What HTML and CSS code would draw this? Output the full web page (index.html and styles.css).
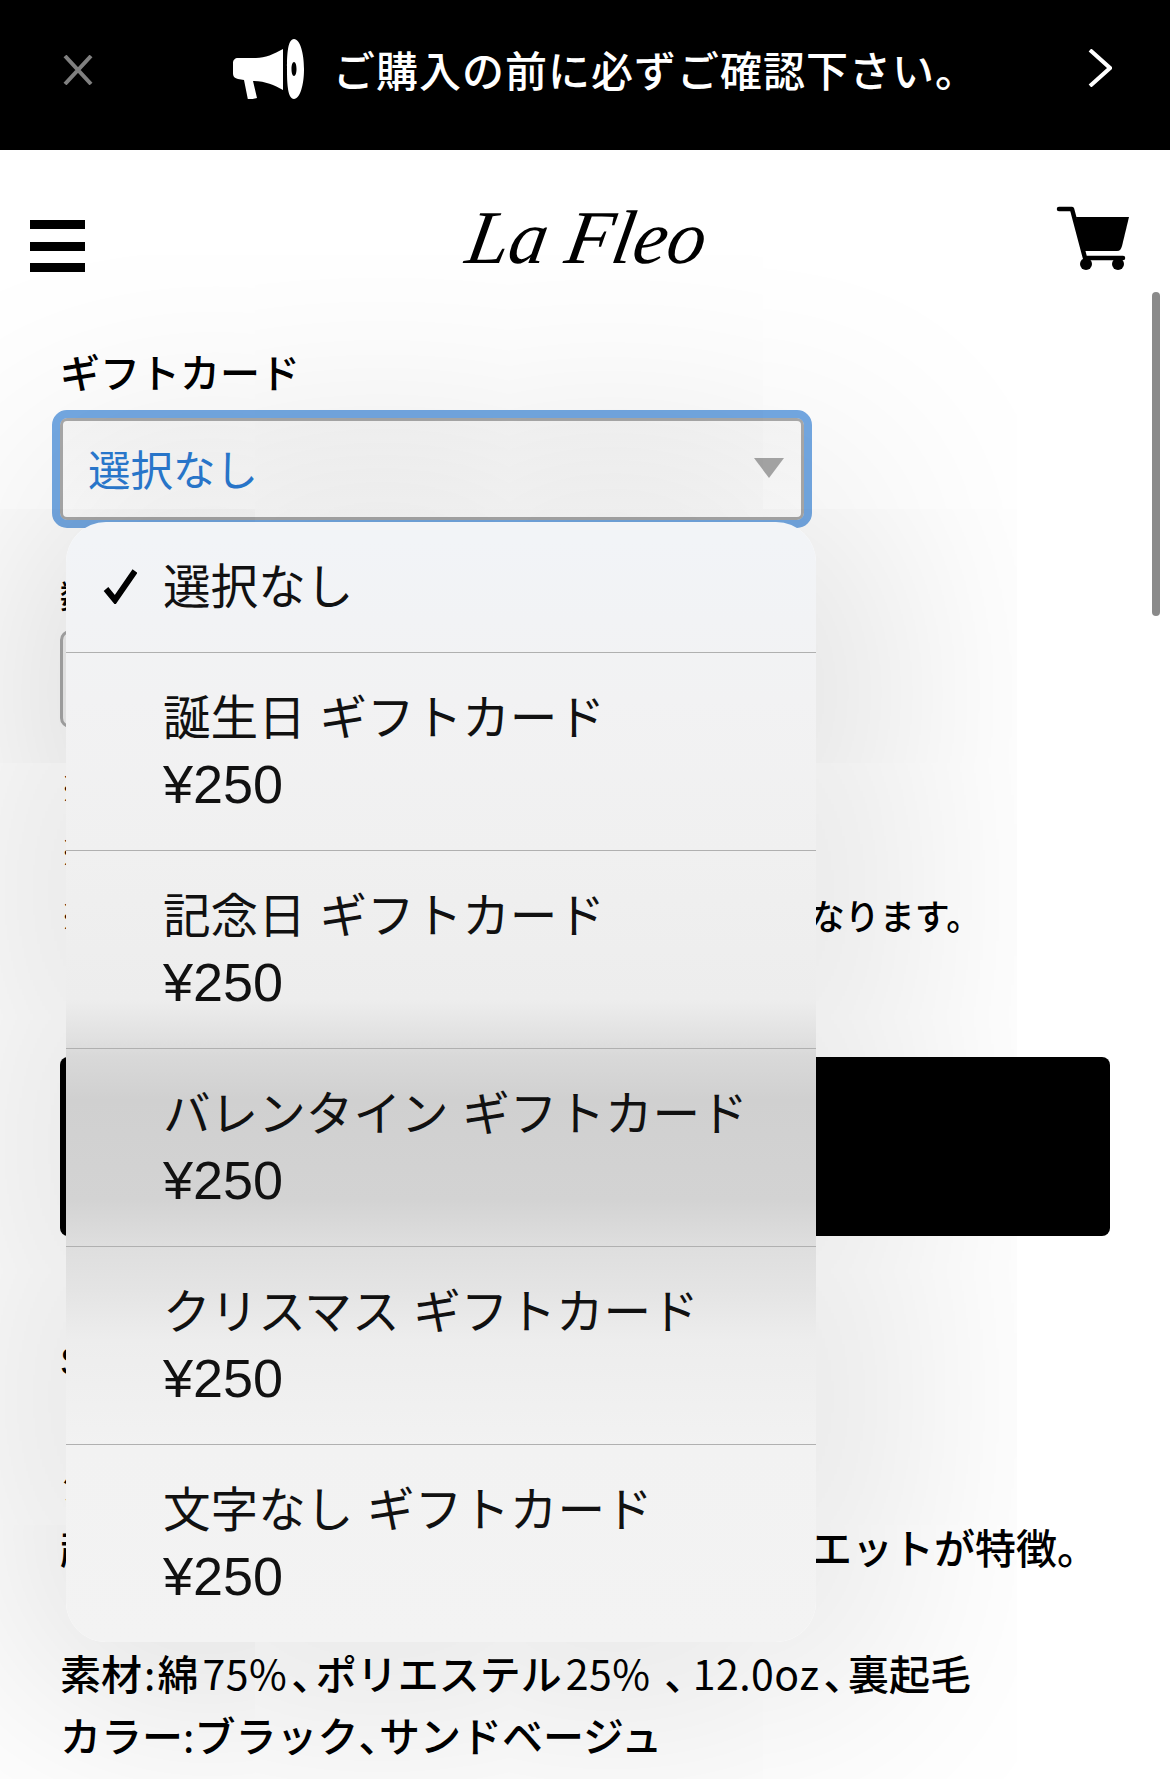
FILE: index.html
```html
<!DOCTYPE html>
<html lang="ja">
<head>
<meta charset="utf-8">
<title>La Fleo</title>
<link rel="stylesheet" href="styles.css">
</head>
<body>
<div class="page">
  <div class="topbar">
    <svg class="close" viewBox="0 0 30 30"><path d="M2 1 28 29M28 1 2 29"/></svg>
    <svg class="horn" viewBox="13 9 72 60"><path d="M63 19 63 60C54 55 45 51 33 51L37 68 28 70 24 50 18 49C14 48 13 46 13 43L13 33C13 30 15 28 18 28L36 28C45 28 54 24 63 19Z"/><path fill-rule="evenodd" d="M74 9C80 9 84 23 84 39S80 69 74 69 67 55 67 39 68 9 74 9ZM74 32C72.500 32 71.500 35 71.500 39S72.500 46 74 46 76.500 43 76.500 39 75.500 32 74 32Z"/></svg>
    <span class="notice">ご購入の前に必ずご確認下さい。</span>
    <svg class="next" viewBox="0 0 24 38"><path d="M2 1 22 19 2 37"/></svg>
  </div>
  <header class="header">
    <div class="burger"><i></i><i></i><i></i></div>
    <div class="logo">La Fleo</div>
    <svg class="cart" viewBox="0 0 100 85"><path class="cart-line" d="M19 14H32L45 63H83"/><path d="M36 22H89L82 51C81 54 80 56 77 56H42Z"/><circle cx="46" cy="69" r="6"/><circle cx="78" cy="69" r="6"/></svg>
  </header>
  <main class="main">
    <div class="label">ギフトカード</div>
    <div class="select focused">
      <span>選択なし</span>
      <svg class="arrow" viewBox="0 0 30 20"><path d="M0 0H30L15 20Z"/></svg>
    </div>
    <div class="label small">数量</div>
    <div class="select plain"></div>
    <ul class="notes">
      <li>※ギフトカードは無料でお付けいたします。</li>
      <li>※メッセージの内容はお選びいただけます。</li>
      <li>※ ギフトカードは お品物とは別に同梱し発送となります。</li>
    </ul>
    <div class="buy"></div>
    <p class="title">Sweat Hoodie</p>
    <p class="copy gap-a">シンプルなデザインの定番パーカー。</p>
    <p class="copy">超ゆったりとした<span class="half tight">、</span>オーバーサイズのシルエットが特徴。</p>
    <p class="copy gap-b">素材<span class="en colon">:</span>綿<span class="en pad">75%</span><span class="half wide">、</span>ポリエステル<span class="en pad">25% </span><span class="half wide">、</span><span class="en pad">12.0oz</span><span class="half wide">、</span>裏起毛</p>
    <p class="copy">カラー<span class="en">:</span>ブラック<span class="half">、</span>サンドベージュ</p>
  </main>
  <div class="menu">
    <div class="option first"><span class="tick"><svg viewBox="0 0 34 36"><path d="M3 21 12 32 32 3"/></svg></span><div>選択なし</div></div>
    <div class="option"><span class="tick"></span><div>誕生日 ギフトカード<br><span class="price">¥250</span></div></div>
    <div class="option"><span class="tick"></span><div>記念日 ギフトカード<br><span class="price">¥250</span></div></div>
    <div class="option"><span class="tick"></span><div>バレンタイン ギフトカード<br><span class="price">¥250</span></div></div>
    <div class="option"><span class="tick"></span><div>クリスマス ギフトカード<br><span class="price">¥250</span></div></div>
    <div class="option last"><span class="tick"></span><div>文字なし ギフトカード<br><span class="price">¥250</span></div></div>
  </div>
  <div class="scrollbar"></div>
</div>
</body>
</html>
```
FILE: styles.css
```css
* { box-sizing: border-box; }
html, body { margin: 0; padding: 0; background: #fff; }
body { font-family: "Noto Sans CJK JP", "Liberation Sans", sans-serif; color: #000; }
.page { position: relative; width: 1170px; height: 1779px; overflow: hidden; background: #fff; }

.topbar { position: relative; z-index: 3; display: flex; align-items: center; height: 150px; padding: 0 58px 12px 63px; background: #000; color: #fff; }
.close { width: 30px; height: 30px; margin-top: 2px; fill: none; stroke: #808080; stroke-width: 4; }
.horn { width: 72px; height: 60px; margin-left: 140px; fill: #fff; }
.notice { margin-left: 28px; font-size: 42px; font-weight: 500; letter-spacing: 1px; line-height: 60px; white-space: nowrap; }
.next { width: 24px; height: 38px; margin-top: -2px; margin-left: auto; fill: none; stroke: #fff; stroke-width: 4; }

.header { position: relative; z-index: 2; display: flex; align-items: flex-start; justify-content: space-between; height: 198px; padding: 57px 30px 0 30px; }
.burger { display: flex; flex-direction: column; gap: 12.500px; width: 55px; margin-top: 13px; }
.burger i { display: block; height: 9px; background: #000; }
.logo { margin-top: -20px; margin-left: 50px; font-family: "Liberation Serif", serif; font-style: italic; font-size: 76px; line-height: 100px; white-space: nowrap; transform: skewX(-10deg); }
.cart { width: 100px; height: 85px; margin-top: -12px; }
.cart-line { fill: none; stroke: #000; stroke-width: 4.500; stroke-linecap: round; stroke-linejoin: round; }

.main { padding: 0 60px; }
.label { font-size: 40px; font-weight: 500; line-height: 46px; }
.label.small { margin-top: 53px; font-size: 32px; line-height: 42px; }
.select { display: flex; align-items: center; justify-content: space-between; width: 744px; height: 98px; padding: 0 17px 0 25px; border: 3px solid #aaa; border-radius: 7px; background: linear-gradient(#f9f9f9, #ffffff); font-size: 42.500px; color: #2a7bd3; }
.select.focused { height: 102px; margin-top: 24px; padding-bottom: 3px; outline: 8px solid #74a9e4; outline-offset: 0; box-shadow: 0 0 0 1px #74a9e4; }
.select.plain { margin-top: 15px; border-radius: 10px; background: #f4f4f4; }
.arrow { width: 30px; height: 20px; fill: #a8a8a8; }

.notes { margin: 27px 0 0; padding: 0; list-style: none; font-size: 35px; font-weight: 500; line-height: 64px; white-space: nowrap; }
.buy { height: 179px; margin-top: 110px; border-radius: 8px; background: #000; }
.title { margin: 95px 0 0; font-family: "Liberation Sans", sans-serif; font-size: 38px; line-height: 62px; }
.copy { margin: 0; font-size: 41px; font-weight: 500; line-height: 62px; white-space: nowrap; }
.copy.gap-a { margin-top: 60px; }
.copy.gap-b { margin-top: 64px; }
.en { font-weight: 400; }
.en.colon { margin: 0 2px; }
.en.pad { margin: 0 4px; letter-spacing: 0.500px; }
.half { font-feature-settings: "halt"; }
.half.wide { letter-spacing: 4px; }
.half.tight { letter-spacing: -5px; }

.menu { position: absolute; z-index: 1; left: 66px; top: 522px; width: 750px; height: 1120px; overflow: hidden; border-radius: 40px; background: linear-gradient(#f2f4f7 18px, #f2f2f3 178px, #f0f0f0 328px, #ededed 478px, #e0e0e0 518px, #d9d9d9 533px, #d0d0d0 578px, #d3d3d3 678px, #dedede 724px, #e4e4e4 768px, #ededed 818px, #f2f2f2 928px, #f3f3f3 1120px); box-shadow: 0 0 400px 40px rgba(0, 0, 0, 0.16); font-size: 47.600px; word-spacing: 3px; line-height: 66px; color: #111; }
.option { display: flex; height: 198px; padding-top: 29px; border-bottom: 1px solid #b0b0b0; white-space: nowrap; }
.option.first { height: 131px; padding-top: 29px; }
.option.last { height: 197px; border-bottom: 0; }
.tick { display: block; flex: none; width: 97px; padding: 17px 0 0 37px; }
.tick svg { display: block; width: 34px; height: 36px; fill: none; stroke: #000; stroke-width: 6; }
.price { font-family: "Liberation Sans", sans-serif; font-size: 54px; vertical-align: -2px; }

.scrollbar { position: absolute; z-index: 4; left: 1152px; top: 292px; width: 8px; height: 324px; border-radius: 4px; background: #8a8a8a; }
```
